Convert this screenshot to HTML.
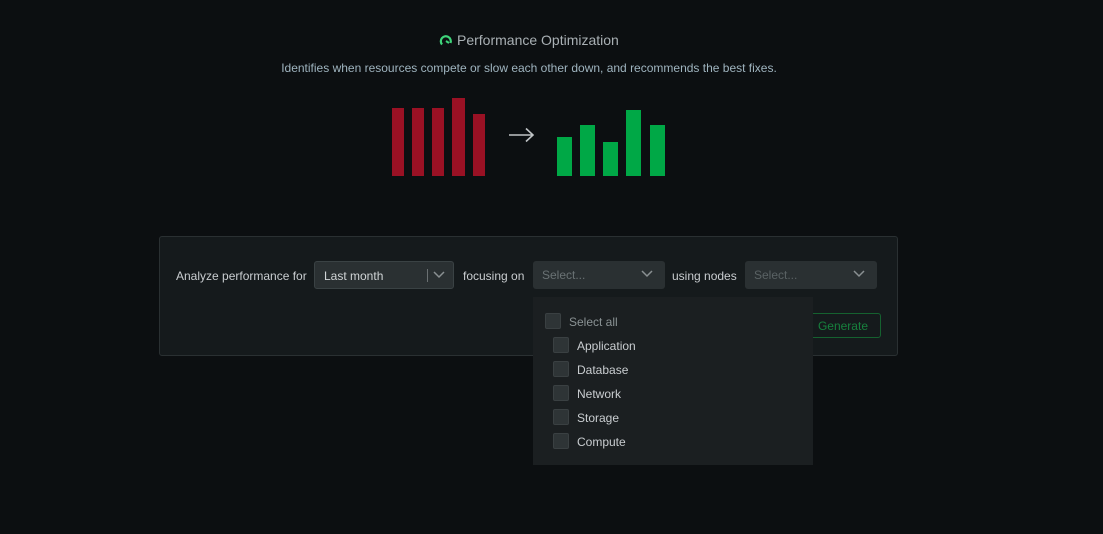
<!DOCTYPE html><html><head><style>
body{margin:0;width:1103px;height:534px;background:#0c0f11;font-family:"Liberation Sans",sans-serif;position:relative;overflow:hidden;color:#c9cdd0}
.a{position:absolute}
.bar{position:absolute;bottom:358px}
.r{background:#9a1124;width:12px}
.g{background:#00a846;width:15px}
.sel{position:absolute;top:261px;height:28px;background:#2a3032;border-radius:3px;font-size:12px;line-height:29px;box-sizing:border-box;padding-left:9px}
.chev{position:absolute;right:12px;top:8px}
.cb{position:absolute;width:14px;height:14px;background:#2e3436;border:1px solid #3a4042;border-radius:2px}
.it{position:absolute;font-size:12px;color:#c9cdd0}
</style></head><body>
<svg class="a" style="left:439px;top:34px" width="14" height="14" viewBox="0 0 14 14"><path d="M3 10.5A5 5 0 1 1 11.5 9" fill="none" stroke="#3fd47a" stroke-width="2.2"/><path d="M7 7l3 2" stroke="#3fd47a" stroke-width="2"/></svg>
<div class="a" style="left:457px;top:32px;font-size:14px;color:#a9b0b4">Performance Optimization</div>
<div class="a" style="left:229px;width:600px;text-align:center;top:61px;font-size:12px;color:#9fb4bf">Identifies when resources compete or slow each other down, and recommends the best fixes.</div>
<div class="bar r" style="left:392px;height:68px"></div>
<div class="bar r" style="left:412px;height:68px"></div>
<div class="bar r" style="left:432px;height:68px"></div>
<div class="bar r" style="left:452px;height:78px;width:13px"></div>
<div class="bar r" style="left:473px;height:62px"></div>
<svg class="a" style="left:508px;top:127px" width="27" height="16"><path d="M1 8h24M18 1.5l7 6.5-7 6.5" fill="none" stroke="#c0c4c6" stroke-width="1.6"/></svg>
<div class="bar g" style="left:557px;height:39px"></div>
<div class="bar g" style="left:580px;height:51px"></div>
<div class="bar g" style="left:603px;height:34px"></div>
<div class="bar g" style="left:626px;height:66px"></div>
<div class="bar g" style="left:650px;height:51px"></div>
<div class="a" style="left:159px;top:236px;width:737px;height:118px;background:#151a1c;border:1px solid #2a3032;border-radius:3px"></div>
<div class="a" style="left:176px;top:269px;font-size:12px">Analyze performance for</div>
<div class="sel" style="left:314px;width:140px;color:#d0d4d6;border:1px solid #3a4244">Last month<div class="a" style="left:112px;top:7px;width:1px;height:13px;background:#6a7072"></div><svg class="chev" style="right:8px" width="12" height="10"><path d="M1 2l5 5 5-5" fill="none" stroke="#8a9092" stroke-width="1.5"/></svg></div>
<div class="a" style="left:463px;top:269px;font-size:12px">focusing on</div>
<div class="sel" style="left:533px;width:132px;color:#6a7274">Select...<svg class="chev" width="12" height="10"><path d="M1 2l5 5 5-5" fill="none" stroke="#8a9092" stroke-width="1.5"/></svg></div>
<div class="a" style="left:672px;top:269px;font-size:12px">using nodes</div>
<div class="sel" style="left:745px;width:132px;color:#5a6264">Select...<svg class="chev" width="12" height="10"><path d="M1 2l5 5 5-5" fill="none" stroke="#8a9092" stroke-width="1.5"/></svg></div>
<div class="a" style="left:800px;top:313px;width:81px;height:25px;border:1px solid #15612f;border-radius:3px;box-sizing:border-box;color:#17803d;font-size:12px;line-height:24px;text-align:right;padding-right:12px">Generate</div>
<div class="a" style="left:533px;top:297px;width:280px;height:168px;background:#1b1f21"></div>
<div class="cb" style="left:545px;top:313px"></div><div class="it" style="left:569px;top:315px;color:#8a9294">Select all</div>
<div class="cb" style="left:553px;top:337px"></div><div class="it" style="left:577px;top:339px">Application</div>
<div class="cb" style="left:553px;top:361px"></div><div class="it" style="left:577px;top:363px">Database</div>
<div class="cb" style="left:553px;top:385px"></div><div class="it" style="left:577px;top:387px">Network</div>
<div class="cb" style="left:553px;top:409px"></div><div class="it" style="left:577px;top:411px">Storage</div>
<div class="cb" style="left:553px;top:433px"></div><div class="it" style="left:577px;top:435px">Compute</div>
</body></html>
